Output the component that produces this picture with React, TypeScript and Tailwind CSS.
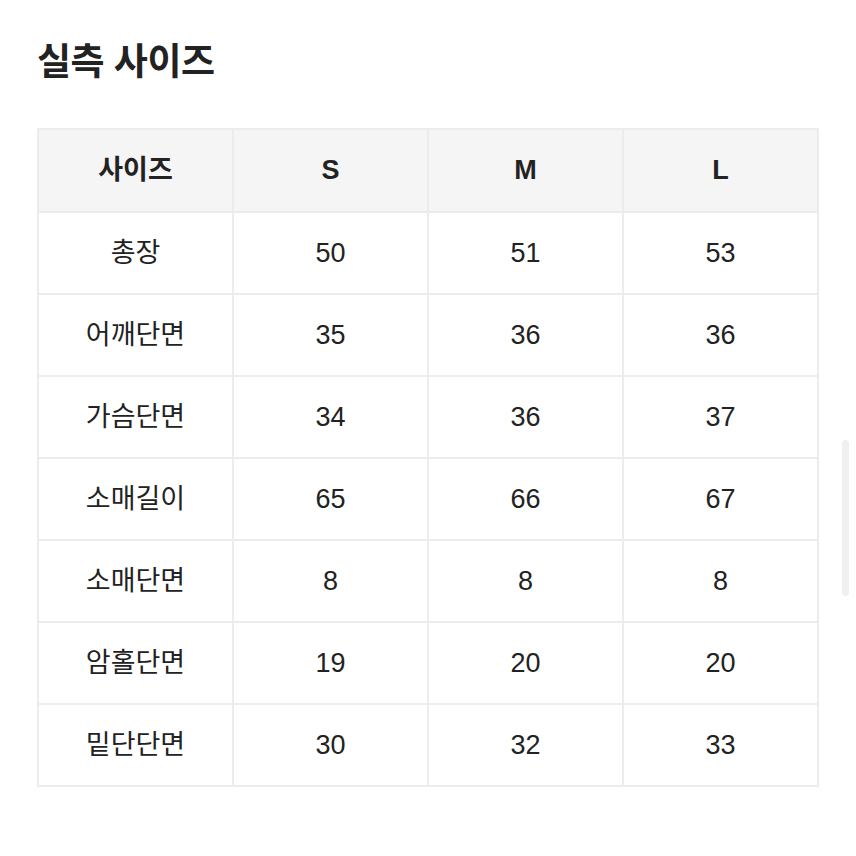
const HEAD = ["사이즈", "S", "M", "L"];

const ROWS: [string, number, number, number][] = [
  ["총장", 50, 51, 53],
  ["어깨단면", 35, 36, 36],
  ["가슴단면", 34, 36, 37],
  ["소매길이", 65, 66, 67],
  ["소매단면", 8, 8, 8],
  ["암홀단면", 19, 20, 20],
  ["밑단단면", 30, 32, 33],
];

export default function App() {
  return (
    <div
      className="relative w-[856px] h-[856px] bg-white text-[#222]"
      style={{ fontFamily: '"Liberation Sans", "Noto Sans CJK KR", sans-serif' }}
    >
      <div className="pt-[36px] pl-[37px] pr-[37px]">
        <h1 className="text-[37px] font-bold leading-[54px] tracking-[-0.5px]">실측 사이즈</h1>

        <table className="mt-[38px] w-[782px] border-collapse table-fixed">
          <thead>
            <tr className="bg-[#f5f5f5] h-[83px]">
              {HEAD.map((h) => (
                <th key={h} className="border-2 border-[#ececec] text-[27px] font-bold">
                  {h}
                </th>
              ))}
            </tr>
          </thead>
          <tbody>
            {ROWS.map((r) => (
              <tr key={r[0]} className="h-[82px]">
                {r.map((c, i) => (
                  <td key={i} className="border-2 border-[#ececec] text-center text-[27px]">
                    {c}
                  </td>
                ))}
              </tr>
            ))}
          </tbody>
        </table>
      </div>

      {/* scrollbar thumb */}
      <div className="absolute left-[842px] top-[440px] w-[7px] h-[156px] rounded-full bg-[#f0f0f0]" />
    </div>
  );
}
